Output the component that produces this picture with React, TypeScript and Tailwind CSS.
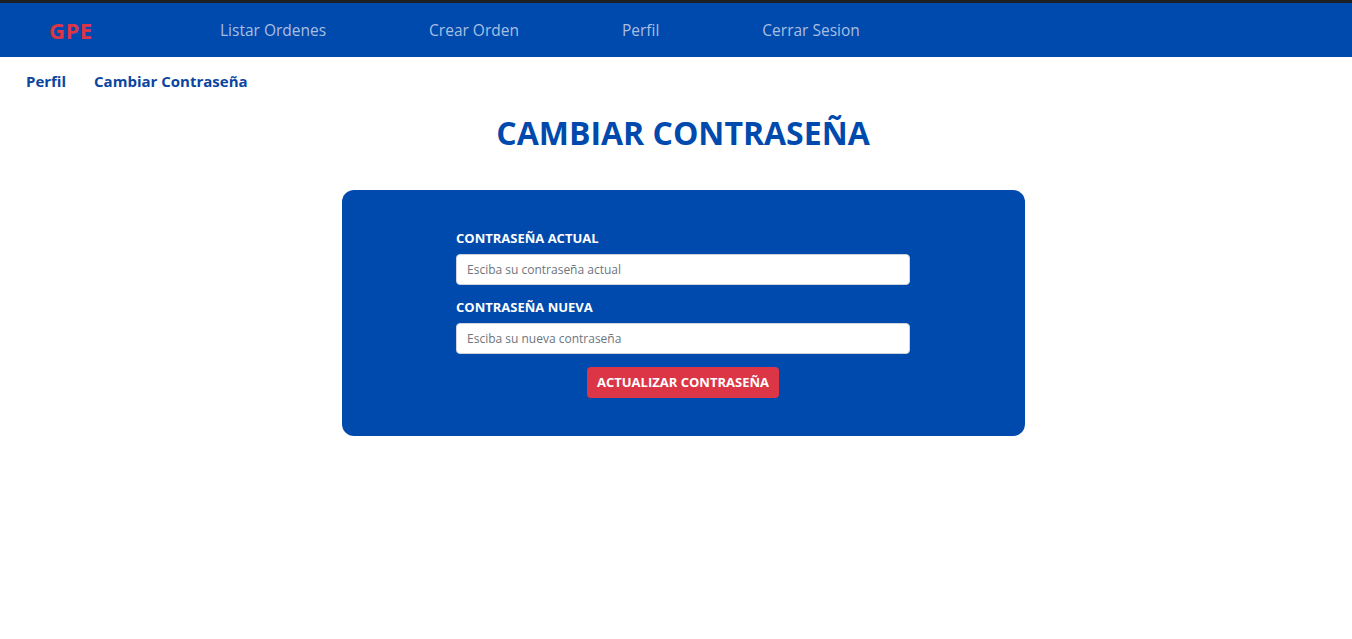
import { useState } from "react";

const links = ["Listar Ordenes", "Crear Orden", "Perfil", "Cerrar Sesion"];

export default function App() {
  const [actual, setActual] = useState("");
  const [nueva, setNueva] = useState("");

  return (
    <div
      className="min-h-screen bg-white"
      style={{ fontFamily: "'Open Sans', 'Noto Sans', sans-serif" }}
    >
      <div className="h-[3px] bg-[#1e1f22]" />
      <nav className="h-[54px] bg-[#004aad] flex items-center">
        <span className="ml-[49px] w-[171px] text-[22px] leading-[28px] font-bold tracking-[0.5px] text-[#dc3545]">
          GPE
        </span>
        <ul className="flex gap-[103px]">
          {links.map((link) => (
            <li
              key={link}
              className="text-[15.5px] leading-[24px] text-[#a9bfe2] cursor-pointer"
            >
              {link}
            </li>
          ))}
        </ul>
      </nav>

      <div className="flex gap-[28px] pl-[26px] pt-[12px] text-[15px] leading-[24px] font-bold text-[#0b45a0]">
        <span>Perfil</span>
        <span>Cambiar Contraseña</span>
      </div>

      <div className="ml-[14px]">
        <h1 className="mt-[20px] text-center text-[32px] leading-[40px] font-bold text-[#004aad]">
          CAMBIAR CONTRASEÑA
        </h1>

        <div className="mx-auto mt-[37px] w-[683px] rounded-xl bg-[#004aad] pt-[40px] pb-[38px]">
          <form
            className="mx-auto w-[454px] flex flex-col"
            onSubmit={(e) => e.preventDefault()}
          >
            <label className="text-[13px] leading-[16px] font-bold text-white">
              CONTRASEÑA ACTUAL
            </label>
            <input
              type="password"
              value={actual}
              onChange={(e) => setActual(e.target.value)}
              placeholder="Esciba su contraseña actual"
              className="mt-[8px] h-[31px] rounded bg-white border border-[#ced4da] px-[10px] text-[12px] text-gray-700 placeholder:text-[#6c757d] outline-none"
            />
            <label className="mt-[14px] text-[13px] leading-[16px] font-bold text-white">
              CONTRASEÑA NUEVA
            </label>
            <input
              type="password"
              value={nueva}
              onChange={(e) => setNueva(e.target.value)}
              placeholder="Esciba su nueva contraseña"
              className="mt-[8px] h-[31px] rounded bg-white border border-[#ced4da] px-[10px] text-[12px] text-gray-700 placeholder:text-[#6c757d] outline-none"
            />
            <button
              type="submit"
              className="mx-auto mt-[13px] h-[31px] w-[192px] rounded bg-[#dc3545] text-[13px] font-bold text-white"
            >
              ACTUALIZAR CONTRASEÑA
            </button>
          </form>
        </div>
      </div>
    </div>
  );
}
